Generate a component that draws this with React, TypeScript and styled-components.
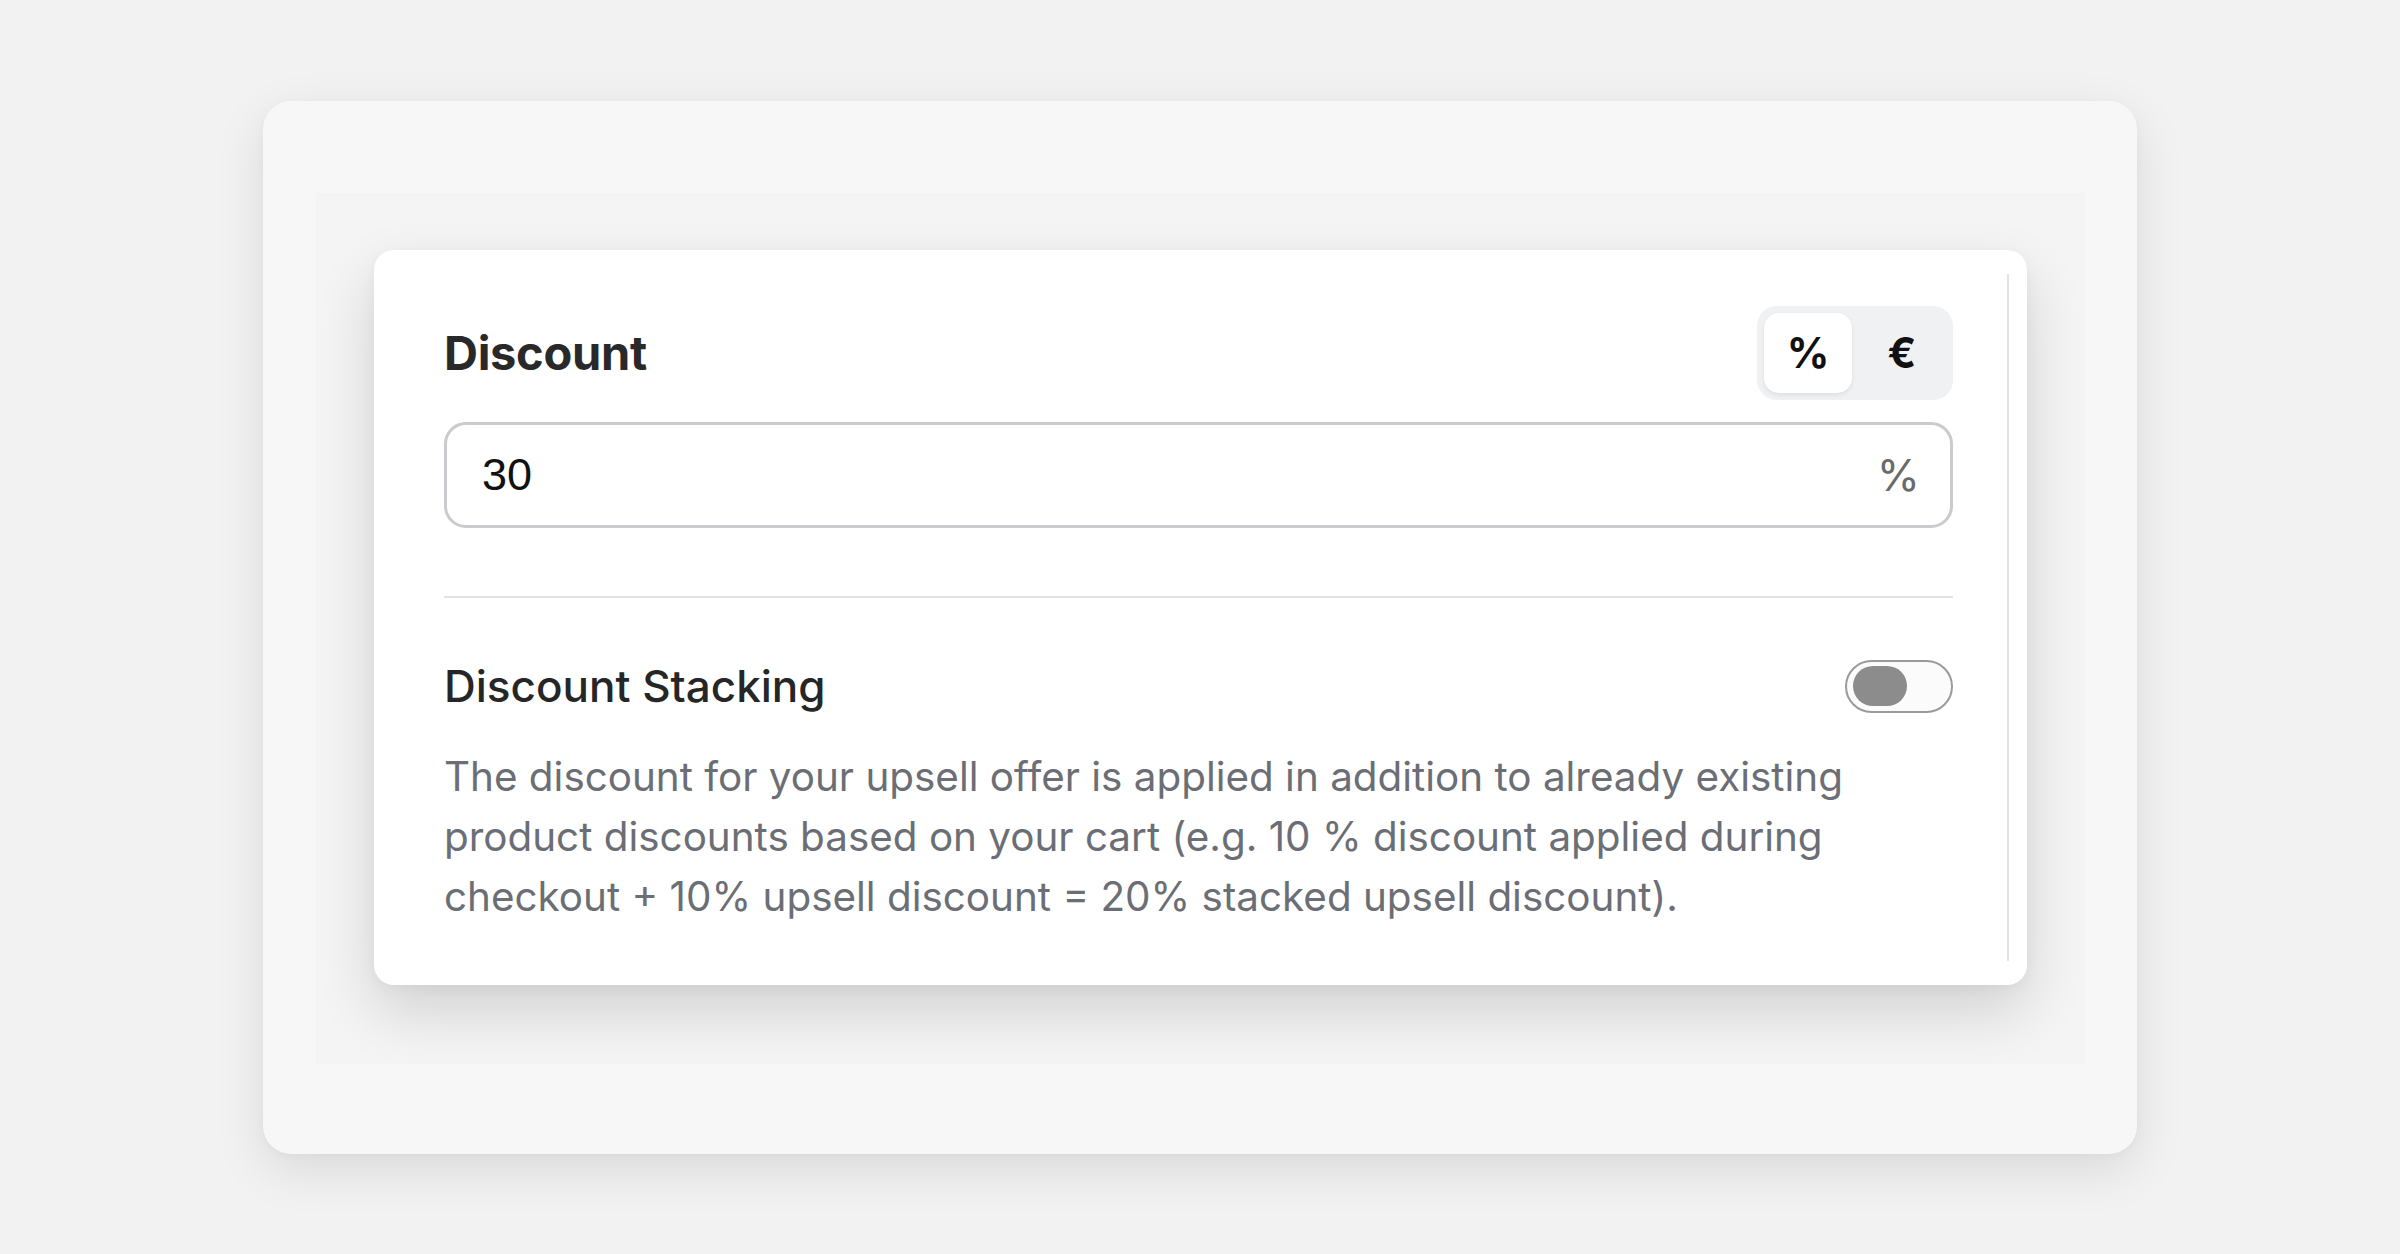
import { useState } from "react";
import styled, { createGlobalStyle } from "styled-components";

const GlobalStyle = createGlobalStyle`
  html, body {
    margin: 0;
    padding: 0;
    background: #f2f2f2;
    font-family: Inter, "Noto Sans", sans-serif;
  }
  * {
    box-sizing: border-box;
  }
`;

const App = () => {
  const [unit, setUnit] = useState<"percent" | "euro">("percent");
  const [value, setValue] = useState("30");
  const [stacking, setStacking] = useState(false);

  return (
    <StPage>
      <GlobalStyle />
      <StFrame>
        <StStage>
          <StCard>
            <StScroll>
              <StHeader>
                <StTitle>Discount</StTitle>
                <StSegment>
                  <StSegmentBtn
                    $active={unit === "percent"}
                    onClick={() => setUnit("percent")}
                  >
                    %
                  </StSegmentBtn>
                  <StSegmentBtn
                    $active={unit === "euro"}
                    onClick={() => setUnit("euro")}
                  >
                    €
                  </StSegmentBtn>
                </StSegment>
              </StHeader>
              <StInputBox>
                <StInput
                  value={value}
                  onChange={(e) => setValue(e.target.value)}
                />
                <StSuffix>{unit === "percent" ? "%" : "€"}</StSuffix>
              </StInputBox>
              <StDivider />
              <StRow>
                <StSubTitle>Discount Stacking</StSubTitle>
                <StSwitch
                  $on={stacking}
                  onClick={() => setStacking(!stacking)}
                  aria-pressed={stacking}
                >
                  <StKnob $on={stacking} />
                </StSwitch>
              </StRow>
              <StText>
                The discount for your upsell offer is applied in addition to
                already existing product discounts based on your cart (e.g. 10
                % discount applied during checkout + 10% upsell discount = 20%
                stacked upsell discount).
              </StText>
            </StScroll>
          </StCard>
        </StStage>
      </StFrame>
    </StPage>
  );
};

export default App;

const StPage = styled.div`
  min-height: 100vh;
  display: flex;
  align-items: center;
  justify-content: center;
`;
const StFrame = styled.div`
  width: 1874px;
  padding: 92px 52px 90px 53px;
  background: #f7f7f7;
  border-radius: 28px;
  box-shadow: 0 16px 50px rgba(0, 0, 0, 0.1), 0 2px 8px rgba(0, 0, 0, 0.03);
`;
const StStage = styled.div`
  background: #f4f4f4;
  padding: 57px 58px 79px 58px;
  overflow: hidden;
`;
const StCard = styled.div`
  background: #ffffff;
  border-radius: 20px;
  padding: 24px 18px 24px 24px;
  box-shadow: 0 26px 60px rgba(0, 0, 0, 0.14), 0 4px 14px rgba(0, 0, 0, 0.04);
`;
const StScroll = styled.div`
  border-right: 2px solid #e3e3e3;
  padding: 32px 54px 34px 46px;
  display: flex;
  flex-direction: column;
`;
const StHeader = styled.div`
  display: flex;
  align-items: center;
  justify-content: space-between;
  height: 94px;
`;
const StTitle = styled.h2`
  margin: 0;
  font-size: 47px;
  font-weight: 700;
  color: #292929;
  letter-spacing: -0.3px;
`;
const StSegment = styled.div`
  display: flex;
  gap: 6px;
  padding: 7px;
  background: #f0f1f3;
  border-radius: 20px;
  height: 94px;
`;
const StSegmentBtn = styled.button<{ $active: boolean }>`
  width: 88px;
  height: 80px;
  border: none;
  border-radius: 15px;
  background: ${(p) => (p.$active ? "#ffffff" : "transparent")};
  box-shadow: ${(p) =>
    p.$active ? "0 2px 5px rgba(0, 0, 0, 0.08)" : "none"};
  font-family: Inter, sans-serif;
  font-size: 42px;
  font-weight: 700;
  color: #111111;
  cursor: pointer;
  padding: 0;
`;
const StInputBox = styled.label`
  margin-top: 22px;
  height: 106px;
  display: flex;
  align-items: center;
  border: 3px solid #c9cbce;
  border-radius: 22px;
  padding: 0 30px 0 35px;
  background: #ffffff;
`;
const StInput = styled.input`
  flex: 1;
  border: none;
  outline: none;
  background: transparent;
  font-family: "Liberation Sans", Arial, sans-serif;
  font-size: 45px;
  color: #111111;
  padding: 0;
`;
const StSuffix = styled.span`
  font-size: 44px;
  color: #6a6a6a;
`;
const StDivider = styled.hr`
  margin: 68px 0 0 0;
  border: none;
  height: 2px;
  background: #e2e2e2;
`;
const StRow = styled.div`
  margin-top: 62px;
  display: flex;
  align-items: center;
  justify-content: space-between;
  height: 53px;
`;
const StSubTitle = styled.h3`
  margin: 0;
  font-size: 44px;
  font-weight: 500;
  color: #262626;
`;
const StSwitch = styled.button<{ $on: boolean }>`
  width: 108px;
  height: 53px;
  padding: 0 6px;
  border: 2px solid #9a9a9a;
  border-radius: 27px;
  background: ${(p) => (p.$on ? "#2b2b2b" : "#fbfbfb")};
  display: flex;
  align-items: center;
  justify-content: ${(p) => (p.$on ? "flex-end" : "flex-start")};
  cursor: pointer;
`;
const StKnob = styled.span<{ $on: boolean }>`
  width: 54px;
  height: 40px;
  border-radius: 20px;
  background: ${(p) => (p.$on ? "#ffffff" : "#8c8c8c")};
`;
const StText = styled.p`
  margin: 34px 0 0 0;
  font-size: 40.4px;
  line-height: 60px;
  color: #6b6e74;
  max-width: 1440px;
`;
